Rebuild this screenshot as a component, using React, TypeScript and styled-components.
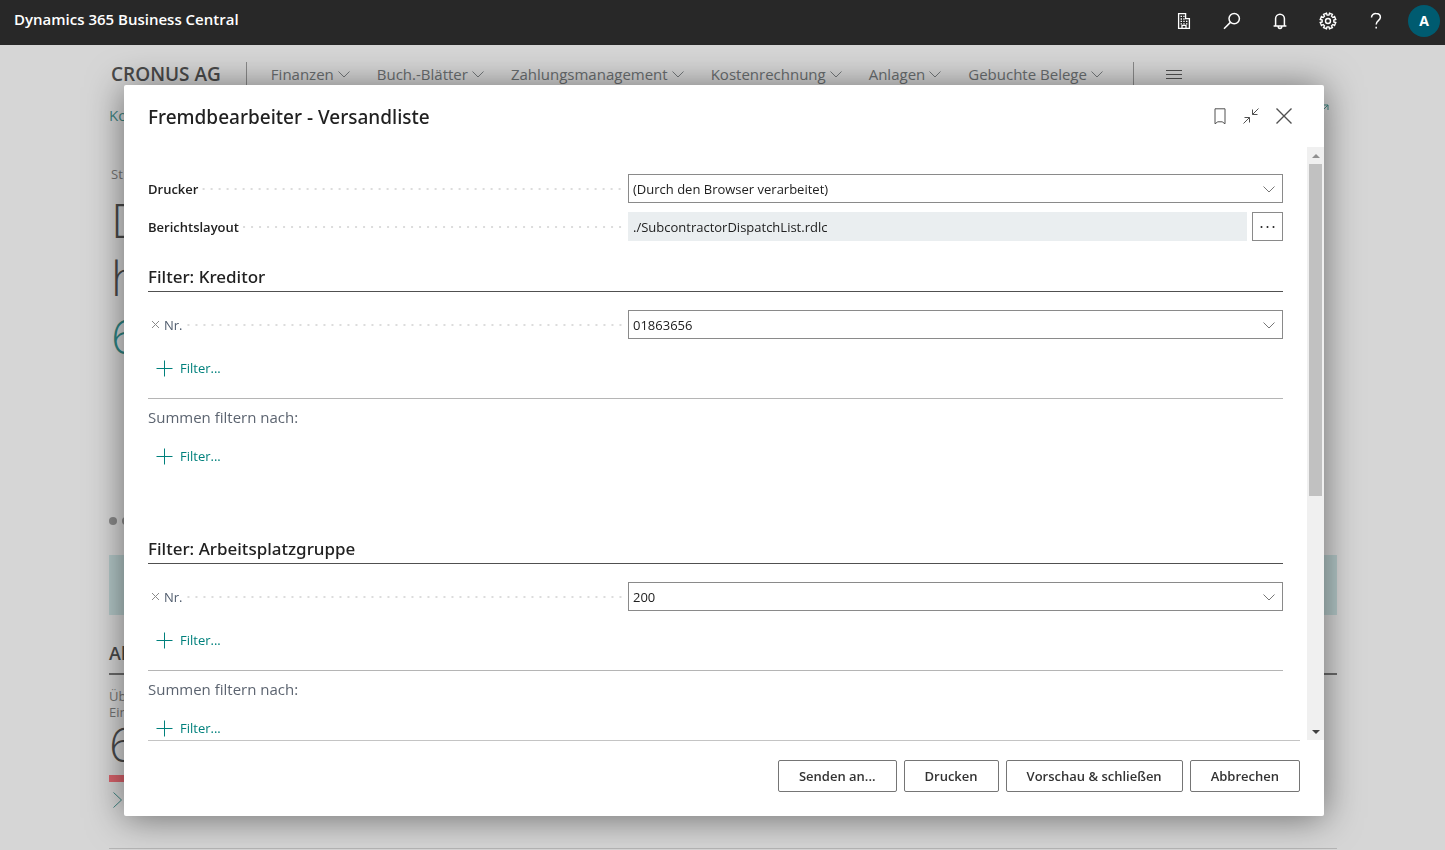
import React from "react";
import styled, { createGlobalStyle } from "styled-components";

const GlobalStyle = createGlobalStyle`
  *, *::before, *::after { box-sizing: border-box; }
  html, body { margin: 0; height: 100%; }
  body {
    background: #d6d6d6;
    color: #212121;
    font-family: "Open Sans", "Noto Sans", sans-serif;
    font-size: 13px;
    overflow: hidden;
  }
  button, input, select { font: inherit; color: inherit; margin: 0; }
  button { cursor: pointer; }
  h1, h2, h3, p { margin: 0; }
`;

const Page = styled.div`
  display: flex;
  flex-direction: column;
  height: 100vh;
  overflow: hidden;
`;

/* ---------- top bar ---------- */

const TopBar = styled.header`
  display: flex;
  flex: none;
  align-items: center;
  justify-content: space-between;
  height: 45px;
  padding: 0 5px 4px 14px;
  background: #282828;
  color: #fff;
`;

const ProductName = styled.span`
  padding-bottom: 4px;
  font-size: 15px;
  font-weight: 600;
  line-height: 20px;
`;

const TopActions = styled.div`
  display: flex;
  align-items: center;
`;

const TopButton = styled.button`
  display: flex;
  align-items: center;
  justify-content: center;
  width: 48px;
  height: 40px;
  padding: 0;
  border: 0;
  background: transparent;
  color: #fff;
`;

const Avatar = styled.button`
  width: 32px;
  height: 32px;
  margin-left: 8px;
  padding: 0;
  border: 0;
  border-radius: 50%;
  background: #005b70;
  color: #fff;
  font-size: 14px;
  font-weight: 700;
`;

/* ---------- role centre behind the dialog ---------- */

const RoleCenter = styled.main`
  display: flex;
  flex-direction: column;
  flex: none;
  padding: 17px 108px 0 109px;
  color: #4a4a4a;
`;

const NavBar = styled.nav`
  display: flex;
  align-items: center;
  height: 24px;
  padding-left: 2px;
`;

const Company = styled.span`
  font-size: 19px;
  font-weight: 600;
  line-height: 24px;
  white-space: nowrap;
`;

const NavDivider = styled.span<{ $trailing?: boolean }>`
  width: 1px;
  height: 24px;
  margin: ${(p) => (p.$trailing ? "0 32px 0 30px" : "0 24px 0 25px")};
  background: #8a8a8a;
`;

const NavItems = styled.div`
  display: flex;
  gap: 27px;
`;

const NavItem = styled.button`
  display: flex;
  align-items: center;
  gap: 4px;
  padding: 0;
  border: 0;
  background: transparent;
  color: #6a6e70;
  font-size: 15px;
  line-height: 24px;
  white-space: nowrap;
`;

const IconButton = styled.button`
  display: flex;
  align-items: center;
  justify-content: center;
  padding: 0;
  border: 0;
  background: transparent;
  color: #505050;
`;

const SubNav = styled.div`
  display: flex;
  justify-content: space-between;
  height: 58px;
  padding: 18px 8px 0 0;
  color: #3f8482;
`;

const SubLink = styled.a`
  color: inherit;
  font-size: 15px;
  line-height: 22px;
  text-decoration: none;
`;

const Headline = styled.section`
  height: 373px;
  padding: 22px 0 0 2px;
`;

const SmallText = styled.p`
  color: #757575;
  font-size: 13px;
  line-height: 16px;
`;

const Hero = styled.p`
  margin-top: 9px;
  font-size: 48px;
  font-weight: 300;
  line-height: 58px;
`;

const HeroValue = styled.span`
  display: block;
  color: #2f8583;
`;

const Pager = styled.div`
  display: flex;
  gap: 5px;
  height: 38px;
`;

const PagerDot = styled.span`
  width: 8px;
  height: 8px;
  border-radius: 50%;
  background: #8a8a8a;
`;

const Banner = styled.div`
  height: 60px;
  background: #b3c7c7;
`;

const Group = styled.section`
  height: 234px;
  padding-top: 26px;
  border-bottom: 1px solid #b5b5b5;
`;

const GroupTitle = styled.h2`
  height: 34px;
  margin-bottom: 13px;
  border-bottom: 2px solid #6b6b6b;
  font-size: 18px;
  font-weight: 600;
  line-height: 24px;
`;

const CueValue = styled.p`
  height: 55px;
  font-size: 48px;
  font-weight: 300;
  line-height: 48px;
`;

const CueBar = styled.div`
  width: 100px;
  height: 7px;
  margin-bottom: 10px;
  background: #d9636c;
`;

/* ---------- dialog ---------- */

const Overlay = styled.div`
  position: fixed;
  inset: 45px 0 0;
  display: flex;
  padding: 40px 121px 34px 124px;
`;

const Dialog = styled.section`
  display: flex;
  flex-direction: column;
  flex: 1;
  min-width: 0;
  background: #fff;
  border-radius: 2px;
  box-shadow: 0 2px 36px rgba(0, 0, 0, 0.5);
`;

const DialogHeader = styled.header`
  display: flex;
  flex: none;
  align-items: center;
  justify-content: space-between;
  height: 62px;
  padding: 0 32px 0 24px;
`;

const DialogTitle = styled.h1`
  padding-top: 2px;
  font-family: "Noto Sans", "Open Sans", sans-serif;
  font-size: 19px;
  font-weight: 500;
  line-height: 28px;
`;

const DialogActions = styled.div`
  display: flex;
  align-items: center;
  gap: 17px;
`;

const DialogBody = styled.div`
  display: flex;
  flex: 1;
  min-height: 0;
`;

const ScrollArea = styled.div`
  flex: 1;
  min-width: 0;
  padding: 27px 24px 0 24px;
  overflow-y: auto;
  scrollbar-width: none;
`;

const ScrollRail = styled.div`
  display: flex;
  flex: none;
  flex-direction: column;
  align-items: center;
  width: 17px;
  background: #f0f0f0;
`;

const RailArrow = styled.span<{ $down?: boolean }>`
  display: flex;
  align-items: center;
  justify-content: center;
  height: 17px;
  margin-top: ${(p) => (p.$down ? "auto" : "0")};
  color: ${(p) => (p.$down ? "#404040" : "#909090")};
`;

const RailThumb = styled.span`
  width: 13px;
  height: 56%;
  background: #c1c1c1;
`;

const FieldRow = styled.div`
  display: flex;
  align-items: center;
  height: 29px;
  margin-bottom: 9px;
`;

const LabelCell = styled.div`
  display: flex;
  flex: 0 0 480px;
  align-items: center;
  padding-right: 4px;
`;

const FieldLabel = styled.label<{ $strong?: boolean }>`
  color: ${(p) => (p.$strong ? "#212121" : "#505c6d")};
  font-weight: ${(p) => (p.$strong ? 600 : 400)};
  line-height: 20px;
`;

const Leader = styled.span`
  flex: 1;
  height: 8px;
  margin-left: 4px;
  background: radial-gradient(circle, #dcdcdc 1px, transparent 1px) right center / 8px 8px;
`;

const RemoveButton = styled.button`
  display: flex;
  align-items: center;
  padding: 0 4px 0 3px;
  border: 0;
  background: transparent;
  color: #8a8a8a;
`;

const Control = styled.div`
  position: relative;
  display: flex;
  flex: 1;
  height: 29px;
  min-width: 0;
`;

const controlBox = `
  flex: 1;
  min-width: 0;
  height: 29px;
  padding: 0 32px 0 4px;
  border: 1px solid #8a8a8a;
  border-radius: 0;
  background: #fff;
  outline: 0;
`;

const Select = styled.select`
  ${controlBox}
  appearance: none;
`;

const TextInput = styled.input`
  ${controlBox}
`;

const ReadOnlyInput = styled.input`
  flex: 1;
  min-width: 0;
  height: 29px;
  margin-right: 5px;
  padding: 0 5px;
  border: 0;
  background: #eaeef0;
  outline: 0;
`;

const DropMark = styled.span`
  position: absolute;
  top: 0;
  right: 8px;
  display: flex;
  align-items: center;
  height: 29px;
  color: #666;
  pointer-events: none;
`;

const AssistButton = styled.button`
  display: flex;
  align-items: center;
  justify-content: center;
  width: 31px;
  height: 29px;
  padding: 0;
  border: 1px solid #8a8a8a;
  background: #fff;
`;

const FilterSection = styled.section`
  height: 272px;
`;

const SectionTitle = styled.h2`
  height: 42px;
  margin-bottom: 18px;
  padding-top: 15px;
  border-bottom: 1px solid #505050;
  font-family: "Noto Sans", "Open Sans", sans-serif;
  font-size: 17px;
  font-weight: 500;
  line-height: 24px;
`;

const AddFilter = styled.button`
  display: flex;
  align-items: center;
  gap: 7px;
  height: 40px;
  padding: 0 8px;
  border: 0;
  background: transparent;
  color: #00807c;
`;

const TotalsTitle = styled.h3`
  margin: 10px 0 0;
  padding: 7px 0 8px;
  border-top: 1px solid #b5b5b5;
  color: #5c6470;
  font-size: 15px;
  font-weight: 400;
  line-height: 22px;
`;

const DialogFooter = styled.footer`
  display: flex;
  flex: none;
  justify-content: flex-end;
  gap: 7px;
  height: 76px;
  margin: 0 24px;
  padding-top: 19px;
  border-top: 1px solid #c4c4c4;
`;

const FooterButton = styled.button`
  height: 32px;
  padding: 0 20px;
  border: 1px solid #757575;
  border-radius: 2px;
  background: #fff;
  font-weight: 600;
  color: #333;
`;

/* ---------- drawings ---------- */

const svgBase = { fill: "none", stroke: "currentColor", "aria-hidden": true } as const;

const Chevron = () => (
  <svg {...svgBase} width="12" height="12" viewBox="0 0 12 12" strokeWidth="0.9">
    <path d="M.5 3.5 6 9l5.5-5.5" />
  </svg>
);

const BuildingIcon = () => (
  <svg {...svgBase} width="16" height="18" viewBox="0 0 16 18" strokeWidth="1.3">
    <path d="M2.6 1.6h7v5h3.8v9.8H2.6zM6 16.4v-3h4v3" />
    <path strokeDasharray="1.4 1.3" d="M4.6 4.4h4M4.6 7h4M4.6 9.4h7M4.6 11.8h7" />
  </svg>
);

const SearchIcon = () => (
  <svg {...svgBase} width="18" height="18" viewBox="0 0 18 18" strokeWidth="1.5">
    <circle cx="11.2" cy="6.6" r="5.2" />
    <path d="M7.4 10.4 1 16.8" />
  </svg>
);

const BellIcon = () => (
  <svg {...svgBase} width="16" height="18" viewBox="0 0 16 18" strokeWidth="1.5">
    <path d="M3.6 14V6.6a4.4 4.4 0 0 1 8.8 0V14M1.6 14h12.8M6.2 14.6a1.8 1.8 0 0 0 3.6 0" />
  </svg>
);

const gearPath = (() => {
  const points: string[] = [];
  const teeth = 8;
  for (let i = 0; i < teeth; i++) {
    const a = ((i + 0.5) / teeth) * Math.PI * 2 - Math.PI / 2;
    [
      [-0.24, 5.9],
      [-0.2, 7.9],
      [0.2, 7.9],
      [0.24, 5.9],
    ].forEach(([offset, radius]) => {
      points.push(
        `${(9 + radius * Math.cos(a + offset)).toFixed(2)} ${(9 + radius * Math.sin(a + offset)).toFixed(2)}`
      );
    });
  }
  return `M${points.join("L")}Z`;
})();

const GearIcon = () => (
  <svg {...svgBase} width="18" height="18" viewBox="0 0 18 18" strokeWidth="1.4">
    <path d={gearPath} />
    <circle cx="9" cy="9" r="2.5" />
  </svg>
);

const HelpIcon = () => (
  <svg {...svgBase} width="12" height="18" viewBox="0 0 12 18" strokeWidth="1.5">
    <path d="M1.5 5.6A4.3 4.3 0 0 1 6 1.4c2.6 0 4.4 1.6 4.4 3.9C10.4 8.6 6.2 8.8 6.2 12.4" />
    <path d="M6.2 14.8v1.8" />
  </svg>
);

const MenuIcon = () => (
  <svg {...svgBase} width="16" height="12" viewBox="0 0 16 12">
    <path d="M0 2.5h16M0 6.5h16M0 10.5h16" />
  </svg>
);

const OpenIcon = () => (
  <svg {...svgBase} width="8" height="8" viewBox="0 0 8 8">
    <path d="M1 7l6-6M2 1h5v5" />
  </svg>
);

const BookmarkIcon = () => (
  <svg {...svgBase} width="12" height="17" viewBox="0 0 12 17">
    <path d="M1 .8h10v15l-2.8-2H3.8L1 15.8z" />
  </svg>
);

const CollapseIcon = () => (
  <svg {...svgBase} width="16" height="16" viewBox="0 0 16 16">
    <path d="M15.5.5l-6 6M9.500 1.500v5h5M.5 15.500l6-6M1.500 9.500h5v5" />
  </svg>
);

const CloseIcon = () => (
  <svg {...svgBase} width="16" height="16" viewBox="0 0 16 16" strokeWidth="1.4">
    <path d="m.5.5 15 15M15.5.5l-15 15" />
  </svg>
);

const SmallCross = () => (
  <svg {...svgBase} width="9" height="9" viewBox="0 0 9 9">
    <path d="m1 1 7 7M8 1 1 8" />
  </svg>
);

const PlusIcon = () => (
  <svg {...svgBase} width="17" height="17" viewBox="0 0 17 17">
    <path d="M8.5.5v16M.5 8.5h16" />
  </svg>
);

const DotsIcon = () => (
  <svg width="16" height="4" viewBox="0 0 16 4" fill="currentColor" aria-hidden="true">
    <circle cx="1.5" cy="2" r="1" />
    <circle cx="7.5" cy="2" r="1" />
    <circle cx="13.5" cy="2" r="1" />
  </svg>
);

const ArrowMark = ({ down }: { down?: boolean }) => (
  <svg width="8" height="4" viewBox="0 0 8 4" fill="currentColor" aria-hidden="true">
    <path d={down ? "M0 0h8L4 4z" : "M0 4h8L4 0z"} />
  </svg>
);

const NextIcon = () => (
  <svg {...svgBase} width="16" height="16" viewBox="0 0 16 16" stroke="#3f8482">
    <path d="m4.5.5 8 7.5-8 7.5" />
  </svg>
);

/* ---------- parts ---------- */

const navItems = [
  "Finanzen",
  "Buch.-Blätter",
  "Zahlungsmanagement",
  "Kostenrechnung",
  "Anlagen",
  "Gebuchte Belege",
];

const filterGroups = [
  { id: "kreditor", title: "Filter: Kreditor", value: "01863656" },
  { id: "arbeitsplatzgruppe", title: "Filter: Arbeitsplatzgruppe", value: "200" },
];

const footerActions = ["Senden an...", "Drucken", "Vorschau & schließen", "Abbrechen"];

const FilterButton = () => (
  <AddFilter type="button">
    <PlusIcon />
    Filter...
  </AddFilter>
);

const FilterGroup = ({ id, title, value }: { id: string; title: string; value: string }) => (
  <FilterSection>
    <SectionTitle>{title}</SectionTitle>
    <FieldRow>
      <LabelCell>
        <RemoveButton type="button" aria-label="Filter entfernen">
          <SmallCross />
        </RemoveButton>
        <FieldLabel htmlFor={id}>Nr.</FieldLabel>
        <Leader />
      </LabelCell>
      <Control>
        <TextInput id={id} defaultValue={value} />
        <DropMark>
          <Chevron />
        </DropMark>
      </Control>
    </FieldRow>
    <FilterButton />
    <TotalsTitle>Summen filtern nach:</TotalsTitle>
    <FilterButton />
  </FilterSection>
);

export default function App() {
  return (
    <Page>
      <GlobalStyle />
      <TopBar>
        <ProductName>Dynamics 365 Business Central</ProductName>
        <TopActions>
          <TopButton aria-label="Unternehmen"><BuildingIcon /></TopButton>
          <TopButton aria-label="Suchen"><SearchIcon /></TopButton>
          <TopButton aria-label="Benachrichtigungen"><BellIcon /></TopButton>
          <TopButton aria-label="Einstellungen"><GearIcon /></TopButton>
          <TopButton aria-label="Hilfe"><HelpIcon /></TopButton>
          <Avatar>A</Avatar>
        </TopActions>
      </TopBar>

      <RoleCenter>
        <NavBar>
          <Company>CRONUS AG</Company>
          <NavDivider />
          <NavItems>
            {navItems.map((item) => (
              <NavItem key={item} type="button">
                {item}
                <Chevron />
              </NavItem>
            ))}
          </NavItems>
          <NavDivider $trailing />
          <IconButton aria-label="Menü"><MenuIcon /></IconButton>
        </NavBar>
        <SubNav>
          <SubLink href="#">Ko</SubLink>
          <OpenIcon />
        </SubNav>
        <Headline>
          <SmallText>St</SmallText>
          <Hero>
            D<br />h
            <HeroValue>6</HeroValue>
          </Hero>
        </Headline>
        <Pager>
          <PagerDot />
          <PagerDot />
        </Pager>
        <Banner />
        <Group>
          <GroupTitle>Al</GroupTitle>
          <SmallText>Üb</SmallText>
          <SmallText>Ein</SmallText>
          <CueValue>6</CueValue>
          <CueBar />
          <NextIcon />
        </Group>
      </RoleCenter>

      <Overlay>
        <Dialog role="dialog" aria-labelledby="dialog-title">
          <DialogHeader>
            <DialogTitle id="dialog-title">Fremdbearbeiter - Versandliste</DialogTitle>
            <DialogActions>
              <IconButton aria-label="Lesezeichen"><BookmarkIcon /></IconButton>
              <IconButton aria-label="Verkleinern"><CollapseIcon /></IconButton>
              <IconButton aria-label="Schließen"><CloseIcon /></IconButton>
            </DialogActions>
          </DialogHeader>

          <DialogBody>
            <ScrollArea>
              <FieldRow>
                <LabelCell>
                  <FieldLabel $strong htmlFor="printer">Drucker</FieldLabel>
                  <Leader />
                </LabelCell>
                <Control>
                  <Select id="printer">
                    <option>(Durch den Browser verarbeitet)</option>
                  </Select>
                  <DropMark>
                    <Chevron />
                  </DropMark>
                </Control>
              </FieldRow>
              <FieldRow>
                <LabelCell>
                  <FieldLabel $strong htmlFor="layout">Berichtslayout</FieldLabel>
                  <Leader />
                </LabelCell>
                <Control>
                  <ReadOnlyInput id="layout" readOnly value="./SubcontractorDispatchList.rdlc" />
                  <AssistButton type="button" aria-label="Layout auswählen">
                    <DotsIcon />
                  </AssistButton>
                </Control>
              </FieldRow>
              {filterGroups.map((group) => (
                <FilterGroup key={group.id} {...group} />
              ))}
            </ScrollArea>
            <ScrollRail>
              <RailArrow><ArrowMark /></RailArrow>
              <RailThumb />
              <RailArrow $down><ArrowMark down /></RailArrow>
            </ScrollRail>
          </DialogBody>

          <DialogFooter>
            {footerActions.map((action) => (
              <FooterButton key={action} type="button">{action}</FooterButton>
            ))}
          </DialogFooter>
        </Dialog>
      </Overlay>
    </Page>
  );
}
